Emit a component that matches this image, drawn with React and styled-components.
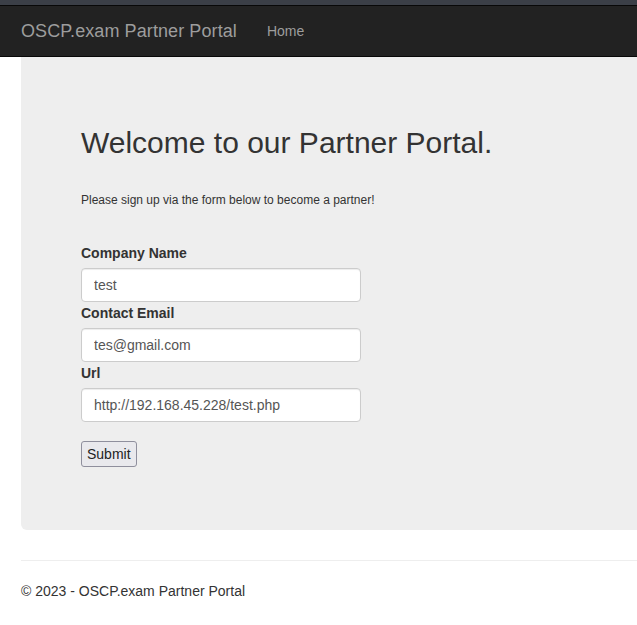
import React from "react";
import styled, { createGlobalStyle } from "styled-components";

const GlobalStyle = createGlobalStyle`
  html, body {
    margin: 0;
    padding: 0;
    background: #fff;
    overflow-x: hidden;
  }
  body {
    font-family: "Liberation Sans", Arial, Helvetica, sans-serif;
    font-size: 14px;
    line-height: 1.42857;
    color: #333;
  }
  * {
    box-sizing: border-box;
  }
`;

const TopStrip = styled.div`
  height: 5px;
  background: #3b3f47;
`;

const Navbar = styled.nav`
  display: flex;
  align-items: center;
  height: 52px;
  padding: 0 21px;
  background: #222;
  border-top: 1px solid #080808;
  border-bottom: 1px solid #080808;
`;

const Brand = styled.a`
  font-size: 18px;
  line-height: 20px;
  letter-spacing: 0.09px;
  color: #9d9d9d;
  text-decoration: none;
  margin-right: 30px;
`;

const NavLink = styled.a`
  font-size: 14px;
  line-height: 20px;
  color: #9d9d9d;
  text-decoration: none;
`;

const Body = styled.div`
  padding-left: 21px;
`;

const Jumbotron = styled.div`
  width: 1140px;
  padding: 48px 60px 63px;
  background: #eee;
  border-radius: 0 0 6px 6px;
`;

const Title = styled.h1`
  margin: 21px 0 0;
  font-size: 30px;
  font-weight: 400;
  line-height: 33px;
  color: #333;
`;

const Lead = styled.p`
  margin: 33px 0 0;
  font-size: 12px;
  line-height: 17px;
`;

const Form = styled.form`
  margin-top: 34px;
  display: flex;
  flex-direction: column;
  align-items: flex-start;
`;

const Group = styled.div`
  margin-bottom: 1px;
`;

const Label = styled.label`
  display: block;
  margin-bottom: 5px;
  font-weight: 700;
  font-size: 14px;
  line-height: 20px;
`;

const Input = styled.input`
  display: block;
  width: 280px;
  height: 34px;
  padding: 6px 12px;
  font-family: inherit;
  font-size: 14px;
  color: #555;
  background: #fff;
  border: 1px solid #ccc;
  border-radius: 4px;
  box-shadow: inset 0 1px 1px rgba(0, 0, 0, 0.075);
  outline: none;
`;

const Button = styled.button`
  margin-top: 18px;
  height: 26px;
  padding: 0 5px;
  font-family: inherit;
  font-size: 14px;
  color: #222;
  background: #e9e9ed;
  border: 1px solid #8f8f9d;
  border-radius: 3px;
`;

const Rule = styled.hr`
  width: 1140px;
  margin: 30px 0 20px;
  border: 0;
  border-top: 1px solid #eee;
`;

const Footer = styled.footer`
  font-size: 14px;
  line-height: 20px;
  padding-bottom: 20px;
`;

const fields = [
  { id: "company", label: "Company Name", value: "test" },
  { id: "email", label: "Contact Email", value: "tes@gmail.com" },
  { id: "url", label: "Url", value: "http://192.168.45.228/test.php" },
];

export default function App() {
  return (
    <>
      <GlobalStyle />
      <TopStrip />
      <Navbar>
        <Brand href="#">OSCP.exam Partner Portal</Brand>
        <NavLink href="#">Home</NavLink>
      </Navbar>
      <Body>
        <Jumbotron>
          <Title>Welcome to our Partner Portal.</Title>
          <Lead>Please sign up via the form below to become a partner!</Lead>
          <Form onSubmit={(e) => e.preventDefault()}>
            {fields.map((f) => (
              <Group key={f.id}>
                <Label htmlFor={f.id}>{f.label}</Label>
                <Input id={f.id} defaultValue={f.value} />
              </Group>
            ))}
            <Button type="submit">Submit</Button>
          </Form>
        </Jumbotron>
        <Rule />
        <Footer>© 2023 - OSCP.exam Partner Portal</Footer>
      </Body>
    </>
  );
}
